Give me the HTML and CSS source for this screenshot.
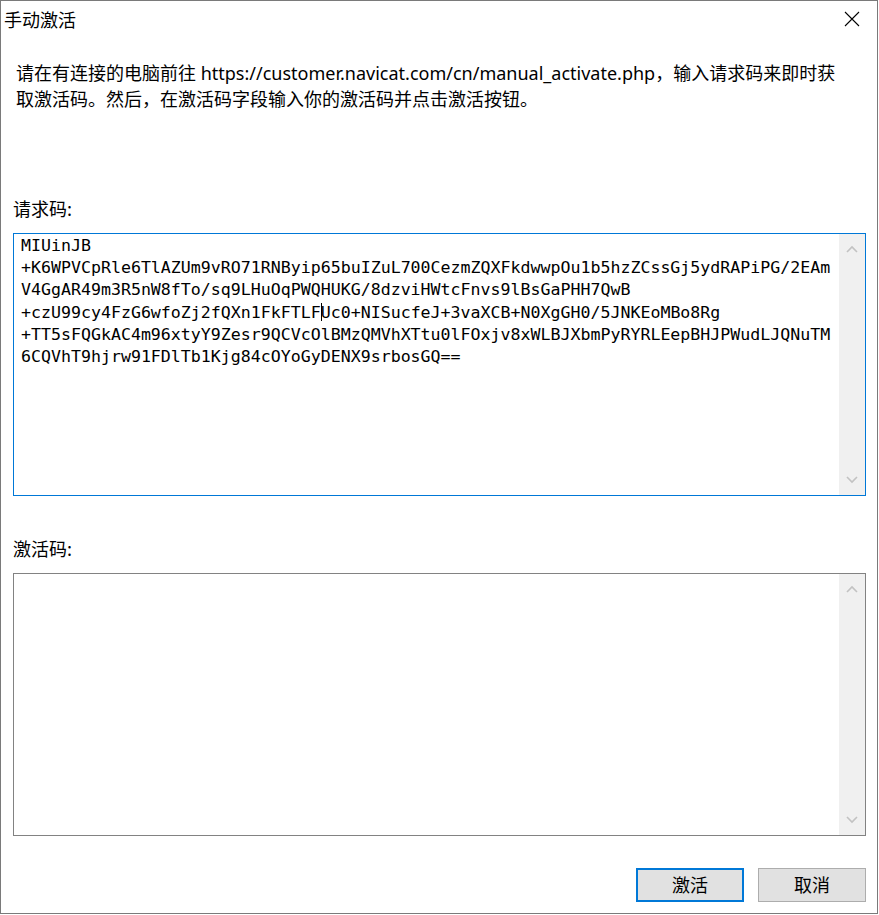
FILE: index.html
```html
<!DOCTYPE html>
<html lang="zh-CN">

<head>
    <meta charset="UTF-8">
    <title>手动激活</title>
    <link rel="stylesheet" href="styles.css">
</head>

<body>
    <div class="window">
        <div class="titlebar">
            <span class="title">手动激活</span>
            <svg class="close" width="16" height="16" viewBox="0 0 16 16">
                <path d="M1 1 L15 15 M15 1 L1 15" stroke="#000" stroke-width="1.1" fill="none" />
            </svg>
        </div>

        <div class="content">
            <p class="intro">请在有连接的电脑前往 https://customer.navicat.com/cn/manual_activate.php，输入请求码来即时获<br>取激活码。然后，在激活码字段输入你的激活码并点击激活按钮。</p>

            <div class="label label-first">请求码:</div>
            <div class="field focused">
                <div class="code">MIUinJB
+K6WPVCpRle6TlAZUm9vRO71RNByip65buIZuL700CezmZQXFkdwwpOu1b5hzZCssGj5ydRAPiPG/2EAm
V4GgAR49m3R5nW8fTo/sq9LHuOqPWQHUKG/8dzviHWtcFnvs9lBsGaPHH7QwB
+czU99cy4FzG6wfoZj2fQXn1FkFTLF<span class="caret"></span>Uc0+NISucfeJ+3vaXCB+N0XgGH0/5JNKEoMBo8Rg
+TT5sFQGkAC4m96xtyY9Zesr9QCVcOlBMzQMVhXTtu0lFOxjv8xWLBJXbmPyRYRLEepBHJPWudLJQNuTM
6CQVhT9hjrw91FDlTb1Kjg84cOYoGyDENX9srbosGQ==</div>
                <div class="scrollbar">
                    <svg width="12" height="8" viewBox="0 0 12 8"><path d="M1 7 L6 2 L11 7" stroke="#c2c2c2" stroke-width="1.6" fill="none" /></svg>
                    <svg width="12" height="8" viewBox="0 0 12 8"><path d="M1 1 L6 6 L11 1" stroke="#c2c2c2" stroke-width="1.6" fill="none" /></svg>
                </div>
            </div>

            <div class="label">激活码:</div>
            <div class="field">
                <div class="code"></div>
                <div class="scrollbar">
                    <svg width="12" height="8" viewBox="0 0 12 8"><path d="M1 7 L6 2 L11 7" stroke="#c2c2c2" stroke-width="1.6" fill="none" /></svg>
                    <svg width="12" height="8" viewBox="0 0 12 8"><path d="M1 1 L6 6 L11 1" stroke="#c2c2c2" stroke-width="1.6" fill="none" /></svg>
                </div>
            </div>

            <div class="buttons">
                <button class="btn default">激活</button>
                <button class="btn">取消</button>
            </div>
        </div>
    </div>
</body>

</html>
```

FILE: styles.css
```css
body {
    margin: 0;
    background: #fff;
    font-family: "Noto Sans", "Noto Sans CJK SC", sans-serif;
    color: #000;
}

.window {
    width: 878px;
    height: 914px;
    box-sizing: border-box;
    border: 1px solid #7a7a7a;
    background: #fff;
}

.titlebar {
    height: 35px;
    display: flex;
    align-items: center;
    justify-content: space-between;
    padding: 0 17px 0 3px;
}

.title {
    font-family: "Noto Sans CJK SC", sans-serif;
    font-size: 18px;
}

.close {
    display: block;
    margin-top: 1px;
}

.content {
    padding: 0 11px 0 12px;
    display: flex;
    flex-direction: column;
}

.intro {
    margin: 24px 0 0 3px;
    font-size: 18px;
    line-height: 26px;
    white-space: nowrap;
}

.label {
    font-family: "Noto Sans CJK SC", sans-serif;
    font-size: 18px;
    line-height: 26px;
    margin-top: 39px;
}

.label-first {
    margin-top: 83px;
}

.field {
    margin-top: 12px;
    height: 263px;
    box-sizing: border-box;
    border: 1px solid #828282;
    display: flex;
}

.field.focused {
    border: 1px solid #0078d7;
}

.code {
    flex: 1;
    padding: 1px 0 0 7px;
    font-family: "DejaVu Sans Mono", monospace;
    font-size: 16.6px;
    line-height: 22.2px;
    white-space: pre;
    overflow: hidden;
}

.caret {
    display: inline-block;
    width: 1px;
    height: 18px;
    background: #000;
    vertical-align: -3px;
    margin-right: -1px;
}

.scrollbar {
    width: 26px;
    background: #f0f0f0;
    display: flex;
    flex-direction: column;
    justify-content: space-between;
    align-items: center;
    padding: 11px 0 11px;
}

.scrollbar svg {
    display: block;
}

.buttons {
    margin-top: 32px;
    display: flex;
    justify-content: flex-end;
    gap: 14px;
}

.btn {
    width: 108px;
    height: 34px;
    box-sizing: border-box;
    background: #e1e1e1;
    border: 1px solid #adadad;
    font-family: "Noto Sans CJK SC", sans-serif;
    font-size: 18px;
    color: #000;
    padding: 0 0 2px;
}

.btn.default {
    border: 2px solid #0078d7;
}
```
